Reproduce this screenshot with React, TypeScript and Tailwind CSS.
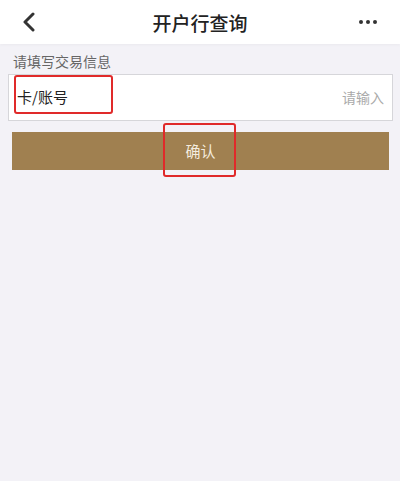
export default function App() {
  return (
    <div
      className="w-[400px] h-[481px] bg-[#f3f2f7] overflow-hidden"
      style={{ fontFamily: '"Noto Sans CJK SC", "Noto Sans", sans-serif' }}
    >
      {/* header */}
      <div className="relative h-[44px] bg-white flex items-center justify-between px-[21px] shadow-[0_1px_3px_rgba(0,0,0,0.04)]">
        <svg width="14" height="20" viewBox="0 0 14 20" className="ml-[1px]">
          <path d="M11 2 L3 10 L11 18" fill="none" stroke="#333" strokeWidth="3" strokeLinecap="round" strokeLinejoin="round" />
        </svg>
        <h1 className="absolute left-0 right-0 text-center text-[19px] font-medium text-[#222] leading-none pointer-events-none">
          开户行查询
        </h1>
        <div className="flex gap-[3px] mr-[2px]">
          <span className="w-[4px] h-[4px] rounded-full bg-[#333]" />
          <span className="w-[4px] h-[4px] rounded-full bg-[#333]" />
          <span className="w-[4px] h-[4px] rounded-full bg-[#333]" />
        </div>
      </div>

      {/* form */}
      <div className="pt-[7px]">
        <p className="pl-[13px] text-[14px] leading-[20px] text-[#666]">请填写交易信息</p>
        <div className="relative mt-[3px] mx-[8px] w-[385px] h-[47px] bg-white border border-[#d6d6da] flex items-center justify-between pl-[8px] pr-[8px]">
          <span className="text-[15px] text-[#222]">卡/账号</span>
          <span className="text-[14px] text-[#aaa]">请输入</span>
          <div className="absolute left-[5px] top-[0px] w-[99px] h-[39px] border-2 border-[#e02a2a] rounded-[3px]" />
        </div>
        <div className="relative mt-[11px] ml-[12px] w-[377px] h-[38px] bg-[#a08050] flex items-center justify-center">
          <span className="text-[15px] text-[#f4ecdf]">确认</span>
          <div className="absolute left-[151px] top-[-9px] w-[73px] h-[54px] border-2 border-[#e02a2a] rounded-[3px]" />
        </div>
      </div>
    </div>
  );
}
